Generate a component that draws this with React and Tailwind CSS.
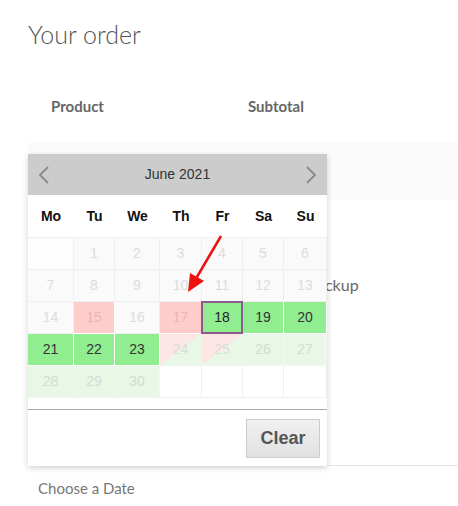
const WEEKDAYS = ['Mo', 'Tu', 'We', 'Th', 'Fr', 'Sa', 'Su'];

// cell kinds: off = disabled grey, busy = booked red, open = available green,
// faded = out of range green, split = half booked, blank = empty
const DAYS = [
  { d: '', k: 'blankGrey' }, { d: 1, k: 'off' }, { d: 2, k: 'off' }, { d: 3, k: 'off' }, { d: 4, k: 'off' }, { d: 5, k: 'off' }, { d: 6, k: 'off' },
  { d: 7, k: 'off' }, { d: 8, k: 'off' }, { d: 9, k: 'off' }, { d: 10, k: 'off' }, { d: 11, k: 'off' }, { d: 12, k: 'off' }, { d: 13, k: 'off' },
  { d: 14, k: 'off' }, { d: 15, k: 'busy' }, { d: 16, k: 'off' }, { d: 17, k: 'busy' }, { d: 18, k: 'selected' }, { d: 19, k: 'open' }, { d: 20, k: 'open' },
  { d: 21, k: 'open' }, { d: 22, k: 'open' }, { d: 23, k: 'open' }, { d: 24, k: 'split' }, { d: 25, k: 'split' }, { d: 26, k: 'faded' }, { d: 27, k: 'faded' },
  { d: 28, k: 'faded' }, { d: 29, k: 'faded' }, { d: 30, k: 'faded' }, { d: '', k: 'blank' }, { d: '', k: 'blank' }, { d: '', k: 'blank' }, { d: '', k: 'blank' },
];

const CELL_STYLES = {
  off: 'bg-[#fafafa] text-[#dcdcdc] border-[#efefef]',
  blankGrey: 'bg-[#fdfdfd] border-[#efefef]',
  blank: 'bg-white border-[#efefef]',
  busy: 'bg-[#ffcccc] text-[#e8b4b4] border-white',
  open: 'bg-[#90ee90] text-[#333] border-white',
  selected: 'bg-[#90ee90] text-[#222] border-white',
  faded: 'bg-[#e8f7e6] text-[#d4dcd4] border-[#f2f7f2]',
  split: 'bg-[linear-gradient(to_bottom_right,#fde6e6_50%,#e8f7e6_50%)] text-[#dcdcdc] border-[#f2f2f2]',
};

const Chevron = ({ dir }) => (
  <svg width="12" height="18" viewBox="0 0 12 18" className="shrink-0">
    <polyline
      points={dir === 'left' ? '10,1 2,9 10,17' : '2,1 10,9 2,17'}
      fill="none"
      stroke="#8a8a8a"
      strokeWidth="1.8"
    />
  </svg>
);

const Calendar = () => (
  <div className="absolute left-[28px] top-[154px] w-[299px] bg-white shadow-[0_2px_6px_rgba(0,0,0,0.18)] font-['Liberation_Sans',Arial,sans-serif]">
    <div className="h-[41px] bg-[#cccccc] flex items-center justify-between px-[10px]">
      <Chevron dir="left" />
      <span className="text-[14px] text-[#333]">June 2021</span>
      <Chevron dir="right" />
    </div>

    <div className="grid grid-cols-[46px_41px_45px_42px_41px_41px_43px] h-[42px] items-center text-center text-[14px] font-bold text-[#111]">
      {WEEKDAYS.map((w) => (
        <span key={w}>{w}</span>
      ))}
    </div>

    <div className="grid grid-cols-[46px_41px_45px_42px_41px_41px_43px] grid-rows-[32px_32px_32px_32px_32px] border-t border-[#efefef]">
      {DAYS.map((c, i) => (
        <div
          key={i}
          className={`relative flex items-center justify-center text-[14px] border-r border-b ${CELL_STYLES[c.k]}`}
        >
          {c.d}
          {c.k === 'selected' && (
            <span className="absolute -left-px -top-px -right-px -bottom-px border-2 border-[#8c5a8c]" />
          )}
        </div>
      ))}
    </div>

    <div className="h-[12px] border-b border-[#aaaaaa]" />
    <div className="h-[56px] flex items-center justify-end pr-[7px]">
      <button className="w-[74px] h-[39px] border border-[#cccccc] bg-[linear-gradient(#f0f0f0,#e2e2e2)] text-[18px] font-bold text-[#555]">
        Clear
      </button>
    </div>
  </div>
);

export default function App() {
  return (
    <div className="relative w-[458px] h-[506px] overflow-hidden bg-white font-['Lato','Open_Sans',sans-serif] text-[#666]">
      <div className="pl-[28px]">
        <h2 className="pt-[19px] text-[25px] font-light leading-[30px] text-[#555]">Your order</h2>

        <div className="mt-[47px] flex text-[15px] font-bold text-[#666] leading-[20px]">
          <span className="w-[220px] pl-[23px]">Product</span>
          <span>Subtotal</span>
        </div>

        <div className="mt-[26px] h-[58px] bg-[#fbfbfb]" />

        <div className="mt-[75px] pl-[244px] text-[16px] text-[#666] leading-[20px]">Local pickup</div>

        <div className="mt-[170px] border-t border-[#e6e6e6] pl-[10px] pt-[12px] text-[15px] leading-[20px] text-[#777]">
          Choose a Date
        </div>
      </div>

      <Calendar />

      <svg className="absolute left-[180px] top-[232px]" width="50" height="66" viewBox="0 0 50 66">
        <line x1="41" y1="4" x2="14" y2="50" stroke="#ee1111" strokeWidth="2.5" />
        <polygon points="8,60 10,41 24,49" fill="#ee1111" />
      </svg>
    </div>
  );
}
